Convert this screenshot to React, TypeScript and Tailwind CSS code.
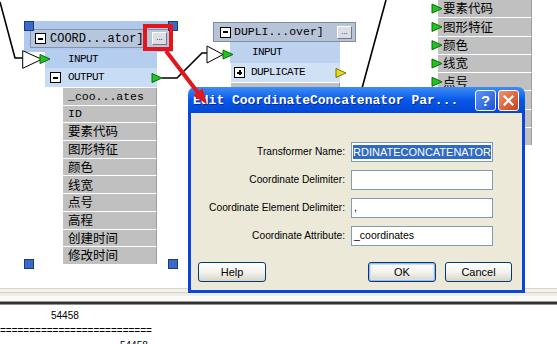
import React from "react";

const attrs = ["_coo...ates", "ID", "要素代码", "图形特征", "颜色", "线宽", "点号", "高程", "创建时间", "修改时间"];
const cjk = /[\u4e00-\u9fff]/;

const AttrRow = ({ label, h }: { label: string; h: string }) => (
  <div
    className={`${h} flex items-center pl-[5px] bg-[#C0C0C0] border-t border-l border-white border-r border-r-[#9C9C9C] text-black overflow-hidden whitespace-nowrap`}
  >
    {cjk.test(label) ? (
      <span className="text-[12.5px] font-['Noto_Sans_CJK_SC',sans-serif] leading-none">{label}</span>
    ) : (
      <span className="text-[11.5px] font-['Liberation_Mono',monospace] leading-none">{label}</span>
    )}
  </div>
);

const MinusBox = ({ plus }: { plus?: boolean }) => (
  <div className="relative w-[11px] h-[11px] bg-white border border-black flex items-center justify-center">
    <div className="w-[5px] h-[2px] bg-black" />
    {plus && <div className="absolute w-[2px] h-[5px] bg-black" />}
  </div>
);

const DotsButton = () => (
  <div className="w-[15px] h-[13px] bg-[#DCDEE6] border border-t-white border-l-white border-b-[#707888] border-r-[#707888] flex items-end justify-center pb-[2px]">
    <span className="text-[8px] leading-none font-['Liberation_Sans',sans-serif] text-black">...</span>
  </div>
);

const Handle = ({ x, y }: { x: string; y: string }) => (
  <div className={`absolute ${x} ${y} w-[10px] h-[10px] bg-[#3A6BCB] border border-[#1C3A7E]`} />
);

const Port = ({ x, cy, color = "#1FC41F" }: { x: number; cy: number; color?: string }) => (
  <polygon
    points={`${x},${cy - 4.5} ${x},${cy + 4.5} ${x + 10},${cy}`}
    fill={color}
    stroke={color === "#1FC41F" ? "#0A6A0A" : "#7A7400"}
    strokeWidth="1"
  />
);

const XpButton = ({ label, w, def }: { label: string; w: string; def?: boolean }) => (
  <div
    className={`${w} h-[20px] rounded-[3px] border border-[#003C74] bg-linear-to-b from-[#FFFFFF] via-[#F4F3EE] to-[#D8D4C6] flex items-center justify-center text-[11px] text-black font-['Liberation_Sans',sans-serif] ${
      def ? "shadow-[inset_0_0_0_1px_#9DB9EB,inset_0_0_0_2px_#CFE0FA]" : ""
    }`}
  >
    {label}
  </div>
);

export default function App() {
  // rows hidden under the dialog keep their gray bar but show no label
  const rightRows = ["要素代码", "图形特征", "颜色", "线宽", "点号", "", "", ""];

  return (
    <div className="relative w-[557px] h-[344px] overflow-hidden bg-white">
      {/* workspace canvas */}
      <div className="relative h-[288px] bg-white">
        {/* node 1 selection */}
        <div className="absolute left-[24px] top-[21px] w-[149px] h-[31px] bg-[#AFC8EC]" />

        {/* node 1 */}
        <div className="absolute left-[30px] top-[29px] flex flex-col">
          <div className="w-[142px] h-[19px] mb-[2px] bg-[#B6C6DC] border border-[#8694AA] flex items-center pl-[4px] pr-[4px] gap-[4px]">
            <MinusBox />
            <span className="flex-1 text-[12px] leading-none font-['Liberation_Mono',monospace] text-black whitespace-nowrap">
              COORD...ator]
            </span>
            <DotsButton />
          </div>
          <div className="ml-[15px] w-[112px] h-[18px] bg-[#B5CDEE] flex items-center pl-[23px]">
            <span className="text-[11px] tracking-[-0.6px] leading-none font-['Liberation_Mono',monospace] text-black">INPUT</span>
          </div>
          <div className="ml-[15px] w-[112px] h-[19px] bg-[#C9DCF5] flex items-center pl-[5px] gap-[7px]">
            <MinusBox />
            <span className="text-[11px] tracking-[-0.6px] leading-none font-['Liberation_Mono',monospace] text-black">OUTPUT</span>
          </div>
          <div className="ml-[32px] w-[95px] flex flex-col">
            {attrs.map((a) => (
              <AttrRow key={a} label={a} h="h-[17.7px]" />
            ))}
          </div>
        </div>

        <Handle x="left-[24px]" y="top-[21px]" />
        <Handle x="left-[168px]" y="top-[21px]" />
        <Handle x="left-[24px]" y="top-[259px]" />
        <Handle x="left-[168px]" y="top-[259px]" />

        {/* node 2 */}
        <div className="absolute left-[213px] top-[22px] flex flex-col">
          <div className="w-[143px] h-[20px] bg-[#B7C4D7] border border-[#7E8CA2] flex items-center pl-[6px] pr-[3px] gap-[3px]">
            <MinusBox />
            <span className="flex-1 text-[11.5px] leading-none font-['Liberation_Mono',monospace] text-black whitespace-nowrap">
              DUPLI...over]
            </span>
            <DotsButton />
          </div>
          <div className="ml-[17px] w-[110px] h-[21px] bg-[#BCD2EF] flex items-center pl-[22px]">
            <span className="text-[11px] tracking-[-0.6px] leading-none font-['Liberation_Mono',monospace] text-black">INPUT</span>
          </div>
          <div className="ml-[17px] w-[110px] h-[19px] bg-[#D0E1F6] border-l border-white flex items-center pl-[3px] gap-[6px]">
            <MinusBox plus />
            <span className="text-[11px] tracking-[-0.6px] leading-none font-['Liberation_Mono',monospace] text-black">DUPLICATE</span>
          </div>
          <div className="ml-[17px] w-[110px] flex flex-col">
            <AttrRow label="" h="h-[18px]" />
            <AttrRow label="" h="h-[18px]" />
          </div>
        </div>

        {/* right node */}
        <div className="absolute left-[437px] top-[-1px] w-[95px] flex flex-col">
          {rightRows.map((a, i) => (
            <AttrRow key={i} label={a} h="h-[18.3px]" />
          ))}
        </div>

        {/* links and ports */}
        <svg className="absolute left-0 top-0" width="557" height="288" viewBox="0 0 557 288">
          <polyline points="0,2 15,58 23,58" fill="none" stroke="#000" strokeWidth="1.6" />
          <polygon points="22.7,50.7 22.7,68.3 41.7,59.3" fill="#fff" stroke="#000" strokeWidth="1" />
          <Port x={40} cy={59} />
          <Port x={152} cy={78} />
          <polyline points="162,78 177,78 202,53 207,53" fill="none" stroke="#000" strokeWidth="1.6" />
          <polygon points="207,46 207,63 223,54.5" fill="#fff" stroke="#000" strokeWidth="1" />
          <Port x={223} cy={54.5} />
          <Port x={336} cy={73} color="#E6DC1A" />
          <line x1="386" y1="0" x2="361" y2="92" stroke="#000" strokeWidth="1.6" />
          {rightRows.map((_, i) => (
            <Port key={i} x={432} cy={-1 + 18.3 * i + 9.6} />
          ))}
        </svg>
      </div>

      {/* splitter */}
      <div className="h-[1px] bg-[#D8D6CC]" />
      <div className="h-[3px] bg-[#F2F1EC]" />
      <div className="h-[1px] bg-[#D4D2C8]" />
      <div className="h-[3px] bg-[#EEEDE6]" />
      <div className="h-[5px] bg-[#FAFAF8]" />
      <div className="h-[1px] bg-[#9A9A9A]" />
      <div className="h-[2px] bg-[#333333]" />
      <div className="h-[1px] bg-[#909090]" />

      {/* log */}
      <div className="bg-white pt-[3px] text-[10px] leading-[15px] font-['Liberation_Sans',sans-serif] text-black whitespace-pre">
        <div className="pl-[51px]">54458</div>
        <div>==========================</div>
        <div className="pl-[120px]">54458</div>
      </div>

      {/* dialog */}
      <div className="absolute left-[188px] top-[87px] w-[337px] h-[206px] flex flex-col">
        <div className="h-[26px] rounded-t-[7px] bg-linear-to-b from-[#3D8DF7] via-[#0658E8] to-[#0447D5] flex items-center pl-[5px] pr-[6px]">
          <span className="flex-1 text-white font-bold text-[13px] leading-none font-['Liberation_Mono',monospace] whitespace-nowrap [text-shadow:1px_1px_0_#0A2A8C]">
            Edit CoordinateConcatenator Par...
          </span>
          <div className="flex gap-[2px]">
            <div className="w-[21px] h-[21px] rounded-[3px] border border-white bg-linear-to-br from-[#5E94F8] to-[#1D52D6] flex items-center justify-center text-white font-bold text-[15px] leading-none font-['Liberation_Sans',sans-serif]">
              ?
            </div>
            <div className="w-[21px] h-[21px] rounded-[3px] border border-white bg-linear-to-br from-[#F09470] to-[#C63E16] flex items-center justify-center">
              <svg width="11" height="11" viewBox="0 0 11 11">
                <path d="M1.5 1.5 L9.5 9.5 M9.5 1.5 L1.5 9.5" stroke="#fff" strokeWidth="2.2" strokeLinecap="square" />
              </svg>
            </div>
          </div>
        </div>
        <div className="flex-1 bg-[#ECE9D8] border-[3px] border-t-0 border-[#0A46DA] flex flex-col pt-[29px] pb-[8px]">
          <div className="grid grid-cols-[154px_142px] gap-x-[6px] gap-y-[8px] text-[10.2px] font-['Liberation_Sans',sans-serif] text-black">
            <div className="h-[20px] flex items-center justify-end">Transformer Name:</div>
            <div className="h-[20px] bg-white border border-[#7F9DB9] flex items-center pl-[1px] overflow-hidden">
              <span className="bg-[#316AC5] text-white text-[11px] leading-[14px] whitespace-nowrap">RDINATECONCATENATOR</span>
            </div>
            <div className="h-[20px] flex items-center justify-end">Coordinate Delimiter:</div>
            <div className="h-[20px] bg-white border border-[#7F9DB9]" />
            <div className="h-[20px] flex items-center justify-end">Coordinate Element Delimiter:</div>
            <div className="h-[20px] bg-white border border-[#7F9DB9] flex items-center pl-[2px] text-[10.5px]">,</div>
            <div className="h-[20px] flex items-center justify-end">Coordinate Attribute:</div>
            <div className="h-[20px] bg-white border border-[#7F9DB9] flex items-center pl-[2px] text-[10.5px]">_coordinates</div>
          </div>
          <div className="mt-[16px] flex pl-[7px] pr-[10px]">
            <XpButton label="Help" w="w-[68px]" />
            <div className="flex-1" />
            <div className="flex gap-[9px]">
              <XpButton label="OK" w="w-[68px]" def />
              <XpButton label="Cancel" w="w-[67px]" />
            </div>
          </div>
        </div>
      </div>

      {/* red annotation */}
      <svg className="absolute left-0 top-0 pointer-events-none" width="557" height="344" viewBox="0 0 557 344">
        <rect x="145" y="26" width="26" height="23" fill="none" stroke="#E3161C" strokeWidth="4" />
        <line x1="166" y1="51" x2="199" y2="94" stroke="#E3161C" strokeWidth="4" />
        <polygon points="207,104 193,95.8 202.6,88.4" fill="#E3161C" />
      </svg>
    </div>
  );
}
